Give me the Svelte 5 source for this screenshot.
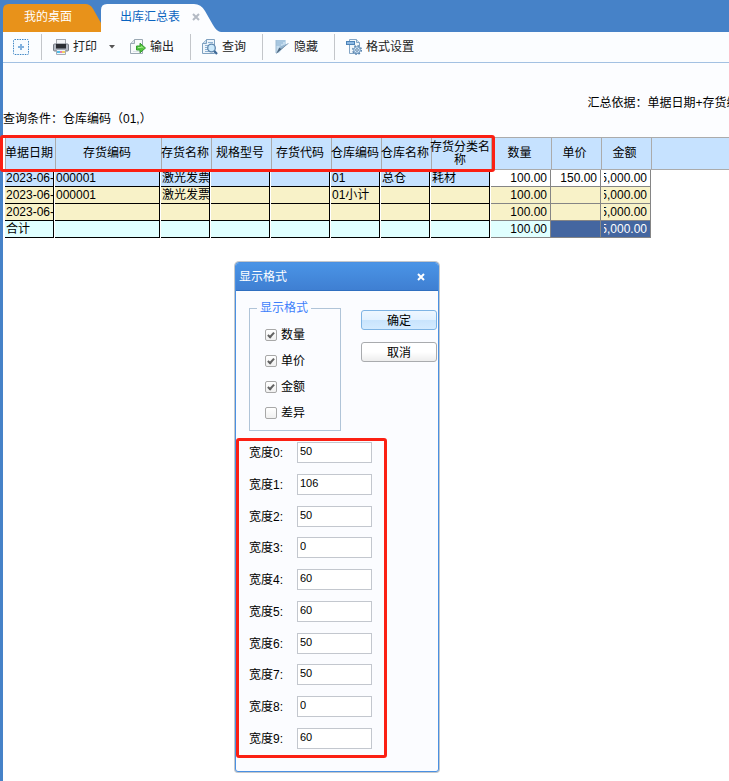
<script lang="ts">
  type Row = { kind: string; cells: string[]; qty: string; price: string; amount: string };

  const headers = [
    '单据日期', '存货编码', '存货名称', '规格型号', '存货代码', '仓库编码', '仓库名称', '存货分类名称'
  ];
  const totals = ['数量', '单价', '金额'];
  const colWidths = [50, 106, 50, 60, 60, 50, 50, 60, 60, 50, 50];

  const rows: Row[] = [
    {
      kind: 'detail',
      cells: ['2023-06-30', '000001', '激光发票', '', '', '01', '总仓', '耗材'],
      qty: '100.00', price: '150.00', amount: '15,000.00'
    },
    {
      kind: 'subtotal',
      cells: ['2023-06-30', '000001', '激光发票', '', '', '01小计', '', ''],
      qty: '100.00', price: '', amount: '15,000.00'
    },
    {
      kind: 'subtotal',
      cells: ['2023-06-30', '', '', '', '', '', '', ''],
      qty: '100.00', price: '', amount: '15,000.00'
    },
    {
      kind: 'total',
      cells: ['合计', '', '', '', '', '', '', ''],
      qty: '100.00', price: '', amount: '15,000.00'
    }
  ];

  let options = $state([
    { label: '数量', checked: true },
    { label: '单价', checked: true },
    { label: '金额', checked: true },
    { label: '差异', checked: false }
  ]);

  let widths = $state(['50', '106', '50', '0', '60', '60', '50', '50', '0', '60']);
</script>

<div class="app">
  <nav class="tabs">
    <button class="tab desk">
      <svg viewBox="0 0 100 28" preserveAspectRatio="none" aria-hidden="true">
        <path d="M0 28V6Q0 0 6 0H84Q89 0 92 5L100 19V28Z" fill="#e8921a" />
      </svg>
      <span>我的桌面</span>
    </button>
    <button class="tab current">
      <svg viewBox="0 0 120 28" preserveAspectRatio="none" aria-hidden="true">
        <path d="M0 28V6Q0 0 6 0H93Q100 0 104 7L112 21Q116 28 120 28Z" fill="#fcfdff" />
      </svg>
      <span>出库汇总表</span>
      <svg class="close" viewBox="0 0 8 8" aria-hidden="true">
        <path d="M1 1L7 7M7 1L1 7" stroke="#b4bac4" stroke-width="2" />
      </svg>
    </button>
  </nav>

  <div class="page">
    <div class="toolbar">
      <div class="group first">
        <button aria-label="添加">
          <svg width="16" height="16" viewBox="0 0 16 16">
            <rect x=".5" y=".5" width="15" height="15" rx="1" fill="#f6fbff" stroke="#3f86c4" stroke-dasharray="1.5 1" />
            <path d="M8 5V11M5 8H11" stroke="#7fb0de" stroke-width="2" />
          </svg>
        </button>
      </div>
      <div class="group">
        <button>
          <svg width="16" height="16" viewBox="0 0 16 16">
            <rect x="3.5" y=".5" width="9" height="5" fill="#f2f4f6" stroke="#a4a8ad" />
            <rect x=".5" y="5" width="15" height="7" rx="1" fill="#b4bac3" stroke="#777d86" />
            <rect x="3" y="5" width="10" height="4" fill="#2b2e33" />
            <path d="M3 9H13V10H3Z" fill="#6c7178" />
            <path d="M3.5 10.500H12.500V15.500H3.500Z" fill="#eef5fb" stroke="#a4abb5" />
            <path d="M4 12H7V14H4Z" fill="#52bde8" />
            <path d="M7 12H9V14H7Z" fill="#ea7fae" />
            <path d="M9 12H12V14H9Z" fill="#f0cd62" />
          </svg>
          打印
        </button>
        <button class="drop" aria-label="打印选项">
          <svg width="6" height="4" viewBox="0 0 6 4"><path d="M0 0H6L3 3.5Z" fill="#555" /></svg>
        </button>
        <button>
          <svg width="16" height="16" viewBox="0 0 16 16">
            <path d="M4.5 .5H12.500V14.500H.5V4.500Z" fill="#f8fafb" stroke="#9aa8b3" />
            <path d="M.5 4.500H4.500V.5" fill="#dde4ea" stroke="#9aa8b3" />
            <path d="M3 12.500H10" stroke="#dbe2e8" />
            <path d="M6.500 7H10V4.200L15.500 9L10 13.800V11H6.500Z" fill="#55c63e" stroke="#379a30" />
            <path d="M8 8.500H11.500V7.500L13.500 9" fill="none" stroke="#a5eb8f" />
          </svg>
          输出
        </button>
      </div>
      <div class="group">
        <button>
          <svg width="16" height="16" viewBox="0 0 16 16">
            <path d="M4.500 .5H12.500V14.500H.5V4.500Z" fill="#eef5fb" stroke="#7fa1c0" />
            <path d="M.5 4.500H4.500V.5" fill="#c8dcec" stroke="#7fa1c0" />
            <path d="M6 3.500H11M3 6.500H6M3 8.500H5M3 10.500H6M3 12.500H7" stroke="#8eb3d3" />
            <circle cx="9.500" cy="9" r="3.800" fill="#cce9fb" stroke="#5e86ad" stroke-width="1.300" />
            <path d="M12.300 12L15 15" stroke="#3f6a98" stroke-width="2.200" />
          </svg>
          查询
        </button>
      </div>
      <div class="group">
        <button class="hide">
          <svg width="14" height="14" viewBox="0 0 14 14">
            <path d="M1 0H11V4L4 13H1Z" fill="#c4dcee" />
            <path d="M1 1H10M1 3H8M1 5H6" stroke="#8bb1d1" />
            <path d="M1 0V13" stroke="#9cbad2" />
            <path d="M14 3L1 14L4 8Z" fill="#4d6780" />
            <path d="M14 3L4 7L6 9Z" fill="#94b5d0" />
          </svg>
          隐藏
        </button>
      </div>
      <div class="group">
        <button>
          <svg width="16" height="16" viewBox="0 0 16 16">
            <path d="M3.500 .5H10.500L13.500 3.500V14.500H3.500Z" fill="#f2f7fb" stroke="#84a6c6" />
            <path d="M10.500 .5V3.500H13.500" fill="#d1e1ef" stroke="#84a6c6" />
            <rect x=".5" y="2.500" width="8" height="3" fill="#8db9e4" stroke="#4d83b7" />
            <circle cx="11" cy="11" r="4.200" fill="none" stroke="#5682ad" stroke-width="1.600" stroke-dasharray="1.650 1.650" />
            <circle cx="11" cy="11" r="3.300" fill="#d9eaf8" stroke="#6d97bf" />
            <circle cx="11" cy="11" r="1.300" fill="#fff" stroke="#5682ad" />
          </svg>
          格式设置
        </button>
      </div>
    </div>

    <div class="conditions">
      <p class="basis">汇总依据：单据日期+存货编码</p>
      <p>查询条件：仓库编码（01,）</p>
    </div>

    <div class="report">
      <table>
        <colgroup>
          {#each colWidths as w}
            <col style="width: {w}px" />
          {/each}
          <col />
        </colgroup>
        <thead>
          <tr>
            {#each headers as h}
              <th><span>{h}</span></th>
            {/each}
            {#each totals as t}
              <th>{t}</th>
            {/each}
            <th></th>
          </tr>
        </thead>
        <tbody>
          {#each rows as row}
            <tr class={row.kind}>
              {#each row.cells as cell}
                <td>{cell}</td>
              {/each}
              <td class="num">{row.qty}</td>
              <td class="num price">{row.price}</td>
              <td class="num amount"><span>{row.amount}</span></td>
              <td class="rest"></td>
            </tr>
          {/each}
        </tbody>
      </table>
      <div class="mark"></div>
    </div>
  </div>

  <div class="dialog" role="dialog" aria-label="显示格式">
    <header>
      <span>显示格式</span>
      <button class="x" aria-label="关闭">
        <svg width="8" height="8" viewBox="0 0 8 8">
          <path d="M1 1L7 7M7 1L1 7" stroke="#fff" stroke-width="2" />
        </svg>
      </button>
    </header>
    <div class="top">
      <fieldset>
        <legend>显示格式</legend>
        {#each options as opt}
          <label><input type="checkbox" bind:checked={opt.checked} />{opt.label}</label>
        {/each}
      </fieldset>
      <div class="actions">
        <button class="ok">确定</button>
        <button>取消</button>
      </div>
    </div>
    <div class="widths">
      {#each widths as _, i}
        <div class="field">
          <label for="w{i}">宽度{i}:</label>
          <input id="w{i}" type="text" bind:value={widths[i]} />
        </div>
      {/each}
    </div>
  </div>
</div>

<style>
  :global(body) {
    margin: 0;
  }

  .app {
    position: relative;
    display: flex;
    flex-direction: column;
    box-sizing: border-box;
    min-height: 100vh;
    padding-left: 3px;
    overflow: hidden;
    background: #4682c8;
    color: #000;
    font: 12px/16px 'Liberation Sans', 'Noto Sans CJK SC', sans-serif;
  }

  button,
  input {
    box-sizing: border-box;
    margin: 0;
    padding: 0;
    font: inherit;
    color: inherit;
  }

  button {
    border: 0;
    background: none;
  }

  /* tabs */
  .tabs {
    display: flex;
    padding-top: 4px;
  }

  .tab {
    position: relative;
    display: flex;
    align-items: center;
    height: 28px;
    padding-bottom: 3px;
  }

  .tab > svg:first-child {
    position: absolute;
    inset: 0;
    width: 100%;
    height: 100%;
  }

  .tab span,
  .tab .close {
    position: relative;
  }

  .desk {
    width: 98px;
    padding-left: 21px;
    color: #fff;
  }

  .current {
    width: 120px;
    padding-left: 19px;
    color: #0a64c0;
  }

  .close {
    width: 8px;
    height: 8px;
    margin-left: 12px;
  }

  /* toolbar */
  .page {
    flex: 1;
    background: #fff;
  }

  .toolbar {
    display: flex;
    align-items: center;
    height: 30px;
    border-bottom: 1px solid #a3c1e2;
    background: #fbfdff;
    color: #222;
  }

  .group {
    display: flex;
    align-items: center;
    height: 26px;
    padding: 0 16px 0 11px;
    border-left: 1px solid #c3c6ca;
  }

  .group.first {
    padding: 0 12px 0 10px;
    border-left: 0;
  }

  .group button {
    display: flex;
    align-items: center;
    gap: 4px;
    white-space: nowrap;
  }

  .group .drop {
    padding: 0 15px 0 12px;
  }

  .group .hide {
    gap: 5px;
    padding-left: 1px;
  }

  /* report */
  .conditions {
    padding: 32px 0 10px;
    background: #fcfdff;
  }

  .conditions p {
    margin: 0;
    white-space: nowrap;
  }

  .conditions .basis {
    margin-left: 80.5%;
  }

  .report {
    position: relative;
    padding-left: 2px;
  }

  table {
    width: 100%;
    table-layout: fixed;
    border-spacing: 0;
  }

  th {
    height: 31px;
    padding: 0 4px 0 0;
    border: solid #ababab;
    border-width: 1px 0 1px 1px;
    background: #c6e2ff;
    font-weight: normal;
    line-height: 13px;
  }

  th span {
    display: block;
    margin: 0 -4px 0 -3px;
  }

  td {
    height: 17px;
    padding: 0 0 0 1px;
    border-right: 1px solid #fff;
    box-shadow: inset -1px -1px #000;
    line-height: 17px;
    white-space: nowrap;
    overflow: hidden;
  }

  .detail td {
    background: #c6e2ff;
  }

  .subtotal td {
    background: #f8f2c8;
  }

  .total td {
    background: #e0ffff;
  }

  td.num {
    padding: 0 3px 0 0;
    border-right: 1px solid #858585;
    box-shadow: inset 0 -1px #858585;
    text-align: right;
  }

  .detail .num {
    background: #fff;
  }

  .amount span {
    display: flex;
    justify-content: flex-end;
    margin-left: 3px;
    overflow: hidden;
  }

  .total .price,
  .total .amount {
    background: #4466a0;
    color: #fff;
  }

  tr .rest {
    border: 0;
    background: #fff;
    box-shadow: none;
  }

  .mark {
    position: absolute;
    top: -2px;
    left: -3px;
    box-sizing: border-box;
    width: 495px;
    height: 37px;
    border: 3px solid #fb2013;
    border-radius: 3px;
  }

  /* dialog */
  .dialog {
    position: absolute;
    top: 262px;
    left: 235px;
    box-sizing: border-box;
    width: 204px;
    padding-bottom: 13px;
    border: 1px solid #4a90e2;
    border-radius: 4px 4px 3px 3px;
    background: #fbfcff;
    box-shadow: 0 0 0 1px #c4c8cc;
  }

  .dialog header {
    display: flex;
    align-items: center;
    justify-content: space-between;
    height: 27px;
    padding: 0 13px 0 3px;
    border-bottom: 1px solid #2f6fc0;
    border-radius: 3px 3px 0 0;
    background: linear-gradient(#4a94e6, #3f7fd2);
    color: #fff;
  }

  .x {
    display: flex;
  }

  .top {
    display: flex;
    align-items: flex-start;
    justify-content: space-between;
    padding: 9px 1px 0 13px;
  }

  fieldset {
    box-sizing: border-box;
    width: 92px;
    height: 131px;
    margin: 0;
    padding: 6px 0 0 15px;
    border: 1px solid #b0c4d8;
  }

  legend {
    margin-left: -8px;
    padding: 0 3px;
    color: #3e7ffb;
  }

  fieldset label {
    display: flex;
    align-items: center;
    gap: 4px;
    height: 26px;
  }

  input[type='checkbox'] {
    position: relative;
    width: 12px;
    height: 12px;
    border: 1px solid #a8a8a8;
    border-radius: 2px;
    background: linear-gradient(#fff, #f0f0f0);
    appearance: none;
  }

  input[type='checkbox']:checked::after {
    content: '';
    position: absolute;
    top: 1px;
    left: 3px;
    width: 2px;
    height: 5px;
    border: solid #626262;
    border-width: 0 2px 2px 0;
    transform: rotate(42deg);
  }

  .actions {
    display: flex;
    flex-direction: column;
    gap: 12px;
    padding-top: 10px;
  }

  .actions button {
    width: 76px;
    height: 20px;
    padding-top: 1px;
    border: 1px solid #a9abae;
    border-radius: 3px;
    background: linear-gradient(#fff, #fff 50%, #ededed);
    line-height: 18px;
  }

  .actions .ok {
    border-color: #7eb4e4;
    background: linear-gradient(#eef7ff, #e2f1ff 50%, #c8e4fd 50%, #d4ebff);
  }

  .widths {
    display: flex;
    flex-direction: column;
    justify-content: space-between;
    box-sizing: border-box;
    width: 151px;
    height: 320px;
    margin-top: 7px;
    padding: 1px 0 6px 10px;
    border: 3px solid #fb2013;
    border-radius: 3px;
  }

  .field {
    display: flex;
    align-items: center;
  }

  .field label {
    width: 48px;
    padding-top: 1px;
  }

  .field input {
    width: 75px;
    height: 21px;
    padding: 0 2px 3px;
    border: 1px solid #c3c7ce;
    background: #fff;
    font-size: 11px;
  }
</style>
